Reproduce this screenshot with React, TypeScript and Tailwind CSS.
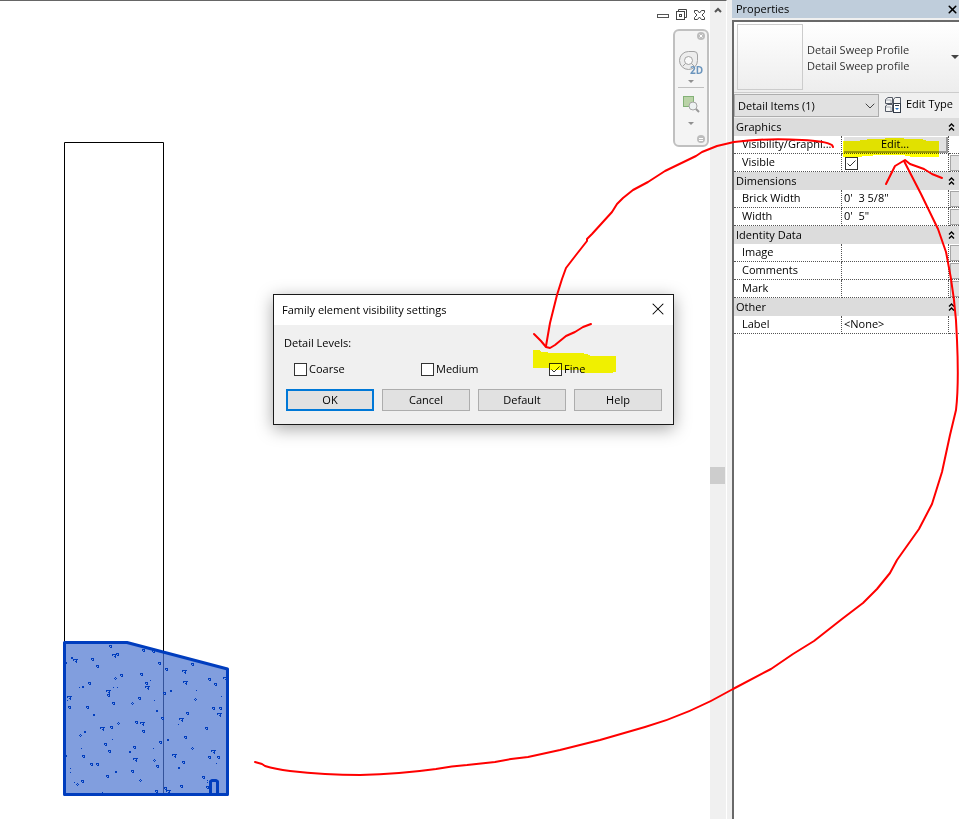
import React, { useState } from "react";
import { ChevronDown, X } from "lucide-react";

type Speck = [number, number];

// Aggregate marks of the concrete hatch, relative to the profile's corner
const LARGE_TRIANGLES: Speck[] = [
  [59, 25], [129, 41], [53, 61], [126, 89], [87, 93], [158, 121], [92, 57], [130, 52], [14, 67], [164, 84],
  [80, 129], [170, 48], [113, 161], [47, 98], [119, 125], [20, 30],
];
const TRIANGLES: Speck[] = [
  [55, 16], [62, 24], [37, 29], [42, 36], [66, 45], [86, 44], [88, 20], [98, 21], [104, 33], [111, 39],
  [137, 34], [91, 53], [34, 53], [53, 65], [14, 77], [32, 77], [58, 73], [84, 68], [107, 88], [109, 63],
  [154, 49], [160, 54], [158, 78], [165, 78], [132, 83], [81, 92], [88, 101], [56, 97], [50, 114], [54, 121],
  [79, 117], [28, 126], [36, 134], [42, 134], [52, 146], [27, 151], [77, 141], [102, 136], [105, 112],
  [130, 107], [151, 98], [163, 127], [154, 127], [128, 132], [148, 147], [152, 157], [126, 156], [101, 161],
  [110, 158],
];
const DIAMONDS: Speck[] = [
  [60, 48], [77, 73], [140, 69], [63, 93], [25, 105], [22, 154], [85, 150], [99, 130], [137, 118],
];
const BLOBS: Speck[] = [
  [17, 28], [28, 57], [102, 81], [39, 85], [116, 61], [30, 102], [61, 142], [75, 122], [113, 110], [124, 138],
  [11, 126], [11, 33],
];
const DOTS: Speck[] = [
  [95, 50], [24, 57], [58, 57], [62, 57], [12, 70], [99, 70], [141, 60], [166, 66], [123, 94], [57, 109],
  [26, 118], [15, 138], [15, 142], [19, 152], [98, 118], [161, 133], [152, 150], [152, 152], [47, 162],
];

function ProfileDrawing() {
  return (
    <svg className="-mt-px block h-[819px] w-full" fill="none" aria-label="Sweep profile">
      <path d="M64.5 642V142.5H163.5V652" stroke="#000" />
      <path d="M64.5 642.5H127L227.5 669V794.5H64.5Z" fill="#819ede" />
      <path d="M163.5 652V794" stroke="#34539a" />
      <g transform="translate(55 630)" fill="#003dbe" shapeRendering="crispEdges">
        {LARGE_TRIANGLES.map(([x, y]) => (
          <path key={`l${x}-${y}`} d={`M${x - 2} ${y - 1}h5v1h-1v3h-1v-1h-1v-1h1v-1h-2v1h-1z`} />
        ))}
        {TRIANGLES.map(([x, y]) => (
          <path key={`t${x}-${y}`} d={`M${x - 1} ${y - 1}h3v3h-2v-1h1v-1h-1v1h-1z`} />
        ))}
        {DIAMONDS.map(([x, y]) => (
          <path key={`d${x}-${y}`} d={`M${x} ${y - 1}h1v1h-1zM${x - 1} ${y}h1v1h-1zM${x + 1} ${y}h1v1h-1zM${x} ${y + 1}h1v1h-1z`} />
        ))}
        {BLOBS.map(([x, y]) => (
          <path key={`b${x}-${y}`} d={`M${x - 1} ${y - 1}h2v2h-2z`} />
        ))}
        {DOTS.map(([x, y]) => (
          <path key={`o${x}-${y}`} d={`M${x} ${y}h1v1h-1z`} />
        ))}
      </g>
      <path
        d="M64.5 642.5H127L227.5 669V794.5H64.5ZM210.5 794V781.5L212 780.5H216L217.5 781.5V794"
        stroke="#003dbe"
        strokeWidth="3"
        strokeLinejoin="round"
      />
    </svg>
  );
}

function WindowControls() {
  return (
    <div className="absolute top-[7px] right-[4px] flex items-center gap-[5px]">
      <button aria-label="Minimize">
        <svg width="13" height="14" fill="#fff" stroke="#555">
          <rect x="0.5" y="6.5" width="11" height="3" />
        </svg>
      </button>
      <button aria-label="Restore">
        <svg width="13" height="14" fill="#fff" stroke="#444">
          <path d="M3.5 3V1.5H11.5V9.5H10" />
          <rect x="1.5" y="3.5" width="8" height="8" />
          <rect x="4.5" y="6.5" width="2" height="2" />
        </svg>
      </button>
      <button aria-label="Close view">
        <svg width="13" height="14" fill="#fff" stroke="#444">
          <path d="M1.5 2.5H4.5L6.5 5L8.5 2.5H11.5V4.5L9 7L11.5 9.5V11.5H8.5L6.5 9L4.5 11.5H1.5V9.5L4 7L1.5 4.5Z" />
        </svg>
      </button>
    </div>
  );
}

function NavigationBar() {
  return (
    <div className="absolute top-[28px] right-px flex w-[36px] flex-col items-center rounded-md border-2 border-[#c0c0c0] bg-[#f4f4f4] pb-px">
      <button aria-label="Close navigation bar" className="self-end">
        <svg width="10" height="10">
          <circle cx="4" cy="5" r="4" fill="#bdbdbd" />
          <path d="M2.5 3.5L5.5 6.5M5.5 3.5L2.5 6.5" stroke="#fff" />
        </svg>
      </button>
      <button aria-label="Steering wheel" className="mt-[9px]">
        <svg width="26" height="26" fill="none" stroke="#a2a2a2">
          <path d="M10.5 1.5H16Q19.5 1.5 19.5 5V10.5A9 9 0 1 1 10.5 1.5Z" fill="#ededed" />
          <circle cx="10.5" cy="10.5" r="4" fill="#fafafa" />
          <path d="M5 16L7.5 13.5M13.5 13.5L16 16" />
          <text x="12" y="24" fill="#6b95bd" stroke="none" className="font-['Open_Sans',sans-serif] text-[10px] font-bold">
            2D
          </text>
        </svg>
      </button>
      <svg width="6" height="4" className="mt-[4px]">
        <path d="M0 0H6L3 3Z" fill="#909090" />
      </svg>
      <hr className="mt-[3px] w-[26px] border-[#c0c0c0]" />
      <button aria-label="Zoom region" className="mt-[7px]">
        <svg width="18" height="18" fill="none">
          <rect x="1.5" y="1.5" width="10" height="10" fill="#bad3a7" stroke="#83b177" />
          <circle cx="11" cy="11" r="4" fill="#eef2f2" stroke="#a5a5a5" />
          <path d="M14 14L17 17" stroke="#999" strokeWidth="2" />
        </svg>
      </button>
      <svg width="6" height="4" className="mt-[9px]">
        <path d="M0 0H6L3 3Z" fill="#909090" />
      </svg>
      <button aria-label="Navigation bar options" className="mt-[8px] self-end">
        <svg width="10" height="10">
          <circle cx="4" cy="5" r="4" fill="#bdbdbd" />
          <path d="M2 4.5H6M2 6.5H6" stroke="#fff" />
        </svg>
      </button>
    </div>
  );
}

type CheckBoxProps = {
  id: string;
  label?: string;
  checked: boolean;
  onChange: (checked: boolean) => void;
};

function CheckBox({ id, label, checked, onChange }: CheckBoxProps) {
  return (
    <span className="relative block size-[13px] shrink-0">
      <input
        id={id}
        type="checkbox"
        aria-label={label}
        checked={checked}
        onChange={(e) => onChange(e.target.checked)}
        className="block size-[13px] appearance-none border border-[#333] bg-white"
      />
      {checked && (
        <svg className="pointer-events-none absolute inset-0" width="13" height="13" fill="none">
          <path d="M2.5 6.5L5 9L10.5 3.5" stroke="#333" />
        </svg>
      )}
    </span>
  );
}

function VisibilityDialog() {
  const [levels, setLevels] = useState({ Coarse: false, Medium: false, Fine: true });

  return (
    <section
      role="dialog"
      aria-labelledby="dialog-title"
      className="absolute top-[293px] left-[273px] w-[401px] border border-[#1a1a1a] bg-[#f0f0f0] font-['Open_Sans',sans-serif] text-[11px] leading-4 text-black shadow-[0_4px_16px_rgba(0,0,0,0.35)]"
    >
      <header className="flex h-[30px] items-center justify-between bg-white pr-[5px] pl-2">
        <h2 id="dialog-title">Family element visibility settings</h2>
        <button aria-label="Close dialog" className="mb-[2px]">
          <X size={20} strokeWidth={1.25} />
        </button>
      </header>
      <div className="pr-[11px] pb-[13px] pl-3">
        <p className="-ml-[2px] py-[10px]">Detail Levels:</p>
        <div className="grid grid-cols-[127px_128px_1fr] pl-2">
          {(Object.keys(levels) as (keyof typeof levels)[]).map((name) => (
            <div key={name} className="flex items-center gap-[2px]">
              <CheckBox id={name} checked={levels[name]} onChange={(v) => setLevels({ ...levels, [name]: v })} />
              <label htmlFor={name}>{name}</label>
            </div>
          ))}
        </div>
        <div className="mt-3 grid grid-cols-4 gap-2">
          <button className="h-[22px] border-2 border-[#0078d7] bg-[#e1e1e1]">OK</button>
          <button className="h-[22px] border border-[#adadad] bg-[#e1e1e1]">Cancel</button>
          <button className="h-[22px] border border-[#adadad] bg-[#e1e1e1]">Default</button>
          <button className="h-[22px] border border-[#adadad] bg-[#e1e1e1]">Help</button>
        </div>
      </div>
    </section>
  );
}

function GroupRow({ title }: { title: string }) {
  return (
    <tr className="h-[18px] bg-[#dcdcdc]">
      <th colSpan={3} className="p-0 pr-1 pl-[2px] text-left font-normal">
        <div className="flex items-center justify-between">
          {title}
          <button aria-label={`Collapse ${title}`}>
            <svg width="7" height="9" fill="none" stroke="#000" strokeWidth="1.4">
              <path d="M1 3.5L3.5 1L6 3.5M1 7.5L3.5 5L6 7.5" />
            </svg>
          </button>
        </div>
      </th>
    </tr>
  );
}

function PropertyRow({ name, children, more }: { name: string; children?: React.ReactNode; more?: boolean }) {
  return (
    <tr className="h-[18px] align-top">
      <th className="border-r border-b border-dotted border-[#555] p-0 pl-2 text-left font-normal whitespace-nowrap">
        {name}
      </th>
      <td className="border-r border-b border-dotted border-[#555] p-0 pl-[2px] whitespace-pre">{children}</td>
      <td className="border-b border-dotted border-[#555] p-0 pl-px">
        {more && (
          <button aria-label={`Associate ${name}`} className="mt-px block h-4 w-full border border-r-0 border-[#a5a5a5] bg-[#e1e1e1]" />
        )}
      </td>
    </tr>
  );
}

function PropertiesPanel() {
  const [visible, setVisible] = useState(true);

  return (
    <aside className="flex w-[227px] shrink-0 flex-col bg-[#f0f0f0] font-['Open_Sans',sans-serif] text-[11px] leading-4 text-black">
      <header className="flex h-[18px] items-center justify-between bg-[#bfcddb] pl-1">
        <h1>Properties</h1>
        <button aria-label="Close properties">
          <X size={13} strokeWidth={3} />
        </button>
      </header>
      <div className="mt-[2px] flex-1 border-t-2 border-l-2 border-[#696969] bg-white">
        <button className="flex w-full items-center border-b border-[#ccc] bg-gradient-to-b from-white to-[#ededed] py-[2px] pl-[3px] text-left text-[#333]">
          <span className="size-[66px] border border-[#ccc]" />
          <span className="ml-1 flex-1 pt-[2px]">
            Detail Sweep Profile
            <br />
            Detail Sweep profile
          </span>
          <svg width="8" height="4">
            <path d="M0 0H8L4 4Z" fill="#444" />
          </svg>
        </button>
        <div className="flex h-[25px] items-center bg-[#f0f0f0]">
          <div className="relative">
            <select
              aria-label="Element filter"
              className="block h-[23px] w-[145px] appearance-none border border-[#adadad] bg-[#e1e1e1] pl-[3px]"
            >
              <option>Detail Items (1)</option>
            </select>
            <ChevronDown size={16} strokeWidth={1.5} className="pointer-events-none absolute top-[4px] right-px text-[#444]" />
          </div>
          <button className="mb-[3px] ml-[6px] flex items-center gap-[5px]">
            <svg width="16" height="17" fill="#f5f5f5" stroke="#555b66">
              <path d="M0.5 3.5L3 1.5H7.5V7.5H0.5ZM8.5 3L10.5 1.5H15.5V7.5H8.5ZM0.5 10L2.5 8.5H7.5V15.5H0.5Z" />
              <path d="M1 4H6V7" fill="none" stroke="#a6abb3" />
              <path d="M1 11H6V15" fill="none" stroke="#a6abb3" />
              <rect x="8.5" y="7.5" width="7" height="9" fill="#fff" stroke="#333b48" />
              <path d="M10 9.5H14" stroke="#333b48" />
              <path d="M10 12H14L12 14Z" fill="#2673c4" stroke="none" />
            </svg>
            Edit Type
          </button>
        </div>
        <table className="w-full table-fixed border-separate border-spacing-0">
          <colgroup>
            <col className="w-[108px]" />
            <col />
            <col className="w-[10px]" />
          </colgroup>
          <tbody>
            <GroupRow title="Graphics" />
            <PropertyRow name="Visibility/Graphi...">
              <button className="mt-px block h-4 w-[104px] border-r-2 border-b-2 border-[#999] bg-[#e1e1e1] leading-[14px]">
                Edit...
              </button>
            </PropertyRow>
            <PropertyRow name="Visible" more>
              <div className="flex h-4 items-end pl-px">
                <CheckBox id="visible" label="Visible" checked={visible} onChange={setVisible} />
              </div>
            </PropertyRow>
            <GroupRow title="Dimensions" />
            <PropertyRow name="Brick Width" more>{"0'  3 5/8\""}</PropertyRow>
            <PropertyRow name="Width" more>{"0'  5\""}</PropertyRow>
            <GroupRow title="Identity Data" />
            <PropertyRow name="Image" more />
            <PropertyRow name="Comments" more />
            <PropertyRow name="Mark" more />
            <GroupRow title="Other" />
            <PropertyRow name="Label">&lt;None&gt;</PropertyRow>
          </tbody>
        </table>
      </div>
    </aside>
  );
}

// Highlighter strokes and hand drawn arrows over the whole workspace
function Markup() {
  return (
    <>
      <svg
        className="pointer-events-none absolute top-0 left-0 mix-blend-multiply"
        width="959"
        height="819"
        fill="#ff0"
        shapeRendering="crispEdges"
      >
        <path d="M533 350H539L541 352H548V353H584V354H587L591 356H616V372H613V373H581V370H549V368H533Z" />
        <path d="M843 141H856L870 139H880L890 138H902L905 139H921L928 141H939V157H912L902 155H880L866 156L858 157H843Z" />
      </svg>
      <svg
        className="pointer-events-none absolute top-0 left-0"
        width="959"
        height="819"
        fill="none"
        stroke="#f00"
        strokeWidth="2"
        strokeLinecap="round"
        strokeLinejoin="round"
      >
        <path d="M833 147L832 145Q825 141 802 140Q765 138 734 142L717 146L702 152L696 156L665 171L648 182L633 190L623 198L617 204L612 212L592 234L587 239V241L576 255L566 268L562 279L557 295L550 323L546 346" />
        <path d="M534 334L541 341L546 347L550 348L555 345L566 336L575 332L583 327L591 324" />
        <path d="M886 184L895 166L905 160L910 164L924 169L932 174L942 178" />
        <path d="M255 762L262 764L265 766Q275 769 290 771Q325 775 360 775Q400 774 436 769Q452 766 467 765L495 762L511 759L528 757L560 750L600 740L645 727Q690 714 733 689L771 669L793 654L814 641L842 619L863 603L877 589L890 573L897 560L919 529L932 504L942 472L950 435L956 410Q959 385 957 340Q956 300 946 252L938 229L921 194L904 161" />
      </svg>
    </>
  );
}

export default function App() {
  return (
    <div className="relative flex min-h-screen overflow-hidden bg-white">
      <main className="relative min-w-0 flex-1 border-t border-[#666]">
        <ProfileDrawing />
        <WindowControls />
        <NavigationBar />
        <VisibilityDialog />
      </main>

      {/* Vertical scrollbar of the view */}
      <div className="flex w-[17px] shrink-0 flex-col border-t border-r border-t-[#666] border-r-white bg-[#f0f0f0]">
        <button aria-label="Scroll up" className="flex h-[17px] w-[15px] items-center justify-center">
          <svg width="8" height="6" fill="none" stroke="#555" strokeWidth="2">
            <path d="M1 5L4 2L7 5" />
          </svg>
        </button>
        <div className="flex-[449]" />
        <div className="h-[17px] w-[15px] bg-[#cdcdcd]" />
        <div className="flex-[335]" />
      </div>
      <div className="w-[5px] shrink-0 bg-[#f0f0f0]" />

      <PropertiesPanel />
      <Markup />
    </div>
  );
}
